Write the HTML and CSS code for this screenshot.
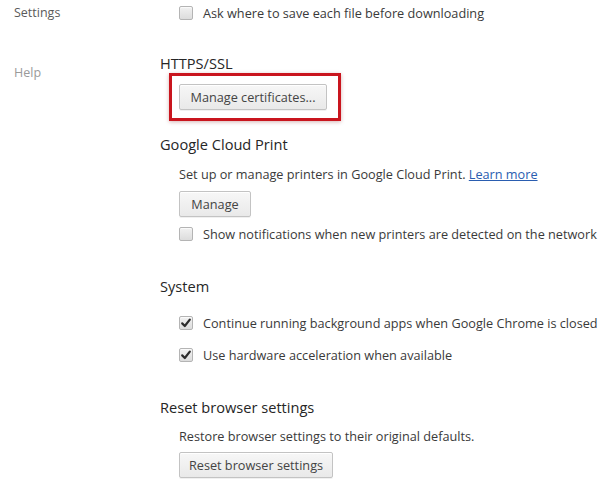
FILE: index.html
```
<!DOCTYPE html>
<html>
<head>
<meta charset="utf-8">
<link rel="stylesheet" href="styles.css">
</head>
<body>
<div class="page">
  <nav class="nav">
    <div class="nav-item current">Settings</div>
    <div class="nav-item help">Help</div>
  </nav>
  <main class="main">
    <label class="check-row first">
      <span class="checkbox"></span>
      <span>Ask where to save each file before downloading</span>
    </label>

    <h3 class="section-title https">HTTPS/SSL</h3>
    <div class="section-body">
      <div class="highlight">
        <button class="btn btn-cert">Manage certificates...</button>
      </div>
    </div>

    <h3 class="section-title gcp">Google Cloud Print</h3>
    <div class="section-body indent">
      <p class="desc desc-gcp">Set up or manage printers in Google Cloud Print. <a href="#" class="link">Learn more</a></p>
      <button class="btn btn-manage">Manage</button>
      <label class="check-row notif">
        <span class="checkbox"></span>
        <span>Show notifications when new printers are detected on the network</span>
      </label>
    </div>

    <h3 class="section-title system">System</h3>
    <div class="section-body indent">
      <label class="check-row sys1">
        <span class="checkbox checked"><svg viewBox="0 0 14 14" width="14" height="14"><path d="M3.2 7.4 L5.8 10 L10.8 3.6" fill="none" stroke="#2b2b2b" stroke-width="2.2" stroke-linecap="round" stroke-linejoin="round"/></svg></span>
        <span>Continue running background apps when Google Chrome is closed</span>
      </label>
      <label class="check-row sys2">
        <span class="checkbox checked"><svg viewBox="0 0 14 14" width="14" height="14"><path d="M3.2 7.4 L5.8 10 L10.8 3.6" fill="none" stroke="#2b2b2b" stroke-width="2.2" stroke-linecap="round" stroke-linejoin="round"/></svg></span>
        <span>Use hardware acceleration when available</span>
      </label>
    </div>

    <h3 class="section-title reset">Reset browser settings</h3>
    <div class="section-body indent">
      <p class="desc desc-reset">Restore browser settings to their original defaults.</p>
      <button class="btn btn-reset">Reset browser settings</button>
    </div>
  </main>
</div>
</body>
</html>
```

FILE: styles.css
```
* { box-sizing: border-box; }
html, body {
  margin: 0;
  padding: 0;
  background: #ffffff;
}
body {
  font-family: "Open Sans", "Noto Sans", "Liberation Sans", sans-serif;
  font-size: 12.7px;
  color: #3a3a3a;
  width: 614px;
  height: 487px;
  overflow: hidden;
}
.page {
  display: flex;
  align-items: flex-start;
}
.nav {
  width: 160px;
  flex: none;
  padding-left: 14px;
  display: flex;
  flex-direction: column;
}
.nav-item {
  height: 26px;
  line-height: 26px;
  font-size: 12.5px;
}
.nav-item.current { color: #5a5a5a; }
.nav-item.help { color: #9a9a9a; margin-top: 34px; }

.main {
  flex: 1;
  display: flex;
  flex-direction: column;
  align-items: flex-start;
}
.check-row {
  display: flex;
  align-items: center;
  height: 26px;
  gap: 10px;
  color: #3a3a3a;
  white-space: nowrap;
}
.check-row.first { margin-left: 19px; }
.checkbox {
  width: 14px;
  height: 14px;
  flex: none;
  border: 1px solid #b4b4b4;
  border-radius: 2px;
  background: linear-gradient(#f1f1f1, #dcdcdc);
  box-shadow: inset 0 1px 1px rgba(255,255,255,0.7);
  display: flex;
  align-items: center;
  justify-content: center;
}
.checkbox svg { display: block; margin: -1px; }

.section-title {
  margin: 0;
  font-weight: normal;
  font-size: 14.6px;
  line-height: 20px;
  height: 20px;
  color: #262626;
}
.section-title.https { margin-top: 27px; }
.section-title.gcp { margin-top: 13px; }
.section-title.system { margin-top: 29px; }
.section-title.reset { margin-top: 29px; }

.section-body {
  display: flex;
  flex-direction: column;
  align-items: flex-start;
}
.section-body.indent { padding-left: 19px; }

.highlight {
  margin-left: 9px;
  border: 3px solid #c9151e;
  padding: 8px 11px 8px 7px;
  box-shadow: 0 1px 4px rgba(120,0,0,0.3);
}

.desc {
  margin: 0;
  line-height: 20px;
  height: 20px;
  white-space: nowrap;
}
.desc-gcp { margin-top: 10px; }
.desc-reset { margin-top: 9px; }
.link { color: #2a5db0; text-decoration: underline; }

.btn {
  font-family: inherit;
  font-size: 12.7px;
  color: #444444;
  height: 26px;
  padding: 0;
  white-space: nowrap;
  border: 1px solid #c3c3c3;
  border-radius: 2px;
  background: linear-gradient(#f7f7f7, #e9e9e9);
  box-shadow: 0 1px 0 rgba(0,0,0,0.06), inset 0 1px 1px #ffffff;
  cursor: default;
}
.btn-cert { width: 148px; }
.btn-manage { width: 72px; margin-top: 7px; }
.btn-reset { width: 154px; margin-top: 6px; }

.check-row.notif { margin-top: 4px; }
.check-row.sys1 { margin-top: 14px; }
.check-row.sys2 { margin-top: 6px; }
```
